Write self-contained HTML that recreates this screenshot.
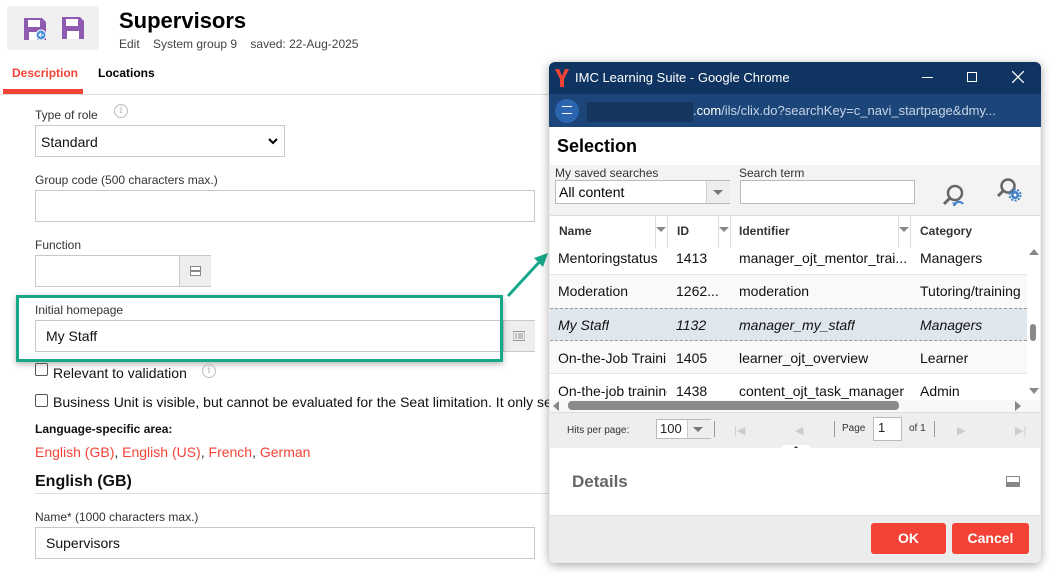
<!DOCTYPE html>
<html><head><meta charset="utf-8"><style>
*{box-sizing:border-box;margin:0;padding:0}
body{width:1052px;height:573px;overflow:hidden;background:#fff;font-family:"Liberation Sans",Arial,sans-serif;position:relative;color:#222}
.a{position:absolute}
.lbl{font-size:12px;color:#333}
.inp{border:1px solid #c8c8c8;background:#fff;position:absolute}
.t14{font-size:14px;color:#111}
.cell{position:absolute;font-size:14px;color:#111;white-space:nowrap;overflow:hidden}
</style></head><body>
<!-- header -->
<div class="a" style="left:7px;top:6px;width:92px;height:44px;background:#f0f0f0;border-radius:4px"></div>
<svg class="a" style="left:23px;top:17px" width="24" height="24" viewBox="0 0 24 24"><path d="M1 1h18l4 4v18H1z" fill="#8e5bb0"/><rect x="5" y="3" width="12" height="7" fill="#fff"/><rect x="6" y="15" width="8" height="8" fill="#fff"/><circle cx="18" cy="18" r="5" fill="#4a90d9" stroke="#fff"/><path d="M21 18h-5m2-2l-2 2 2 2" stroke="#fff" fill="none"/></svg>
<svg class="a" style="left:62px;top:17px" width="22" height="22" viewBox="0 0 22 22"><path d="M0 0h18l4 4v18H0z" fill="#8e5bb0"/><rect x="4" y="2" width="12" height="7" fill="#fff"/><rect x="5" y="14" width="12" height="8" fill="#fff"/></svg>
<div class="a" style="left:119px;top:8px;font-size:22px;font-weight:bold;color:#000">Supervisors</div>
<div class="a" style="left:119px;top:37px;font-size:12px;color:#444">Edit&nbsp;&nbsp;&nbsp;&nbsp;System group 9&nbsp;&nbsp;&nbsp;&nbsp;saved: 22-Aug-2025</div>
<div class="a" style="left:12px;top:66px;font-size:12px;font-weight:bold;color:#f44336">Description</div>
<div class="a" style="left:98px;top:66px;font-size:12px;font-weight:bold;color:#000">Locations</div>
<div class="a" style="left:3px;top:89px;width:80px;height:5px;background:#f44336"></div>
<div class="a" style="left:0;top:94px;width:549px;height:1px;background:#ddd"></div>
<!-- form -->
<div class="a lbl" style="left:35px;top:108px">Type of role</div>
<div class="a" style="left:114px;top:104px;width:14px;height:14px;border:1px solid #bbb;border-radius:50%;font-size:10px;color:#aaa;text-align:center;line-height:12px;font-family:'Liberation Serif'">i</div>
<div class="inp" style="left:35px;top:125px;width:250px;height:32px"><span class="t14 a" style="left:5px;top:8px">Standard</span><svg class="a" style="right:6px;top:12px" width="10" height="7"><path d="M1 1l4 4 4-4" stroke="#000" stroke-width="2" fill="none"/></svg></div>
<div class="a lbl" style="left:35px;top:173px">Group code (500 characters max.)</div>
<div class="inp" style="left:35px;top:190px;width:500px;height:32px"></div>
<div class="a lbl" style="left:35px;top:238px">Function</div>
<div class="inp" style="left:35px;top:255px;width:176px;height:32px"><div class="a" style="left:143px;top:0;width:32px;height:30px;background:#eee;border-left:1px solid #ccc"></div><div class="a" style="left:154px;top:10px;width:11px;height:10px;border:1px solid #888;background:linear-gradient(#fff 3px,#888 3px,#888 5px,#fff 5px)"></div></div>
<div class="a lbl" style="left:35px;top:303px">Initial homepage</div>
<div class="inp" style="left:35px;top:320px;width:500px;height:32px"><span class="t14 a" style="left:10px;top:7px">My Staff</span><div class="a" style="left:467px;top:0;width:32px;height:30px;background:#eee;border-left:1px solid #ccc"></div><svg class="a" style="left:477px;top:10px" width="12" height="10"><path d="M0 .5h12M0 9.5h12M0 .5v9M12 .5v9" stroke="#999"/><path d="M2 3h2M5 3h5M2 5h2M5 5h5M2 7h2M5 7h5" stroke="#999"/></svg></div>
<div class="a" style="left:16px;top:295px;width:487px;height:67px;border:3px solid #16a889;box-shadow:0 2px 6px rgba(0,0,0,.3)"></div>
<svg class="a" style="left:500px;top:250px" width="55" height="50"><path d="M8 46L43 8" stroke="#16a889" stroke-width="3"/><path d="M48 3L34 8l9 9z" fill="#16a889"/></svg>
<div class="a" style="left:35px;top:363px;width:13px;height:13px;border:1px solid #555;border-radius:2px"></div>
<div class="a t14" style="left:53px;top:365px">Relevant to validation</div>
<div class="a" style="left:202px;top:364px;width:14px;height:14px;border:1px solid #bbb;border-radius:50%;font-size:10px;color:#aaa;text-align:center;line-height:12px;font-family:'Liberation Serif'">i</div>
<div class="a" style="left:35px;top:394px;width:13px;height:13px;border:1px solid #555;border-radius:2px"></div>
<div class="a t14" style="left:53px;top:394px;white-space:nowrap">Business Unit is visible, but cannot be evaluated for the Seat limitation. It only se</div>
<div class="a" style="left:35px;top:422px;font-size:12px;font-weight:bold;color:#111">Language-specific area:</div>
<div class="a" style="left:35px;top:444px;font-size:14px;color:#333"><span style="color:#f44336">English (GB)</span>, <span style="color:#f44336">English (US)</span>, <span style="color:#f44336">French</span>, <span style="color:#f44336">German</span></div>
<div class="a" style="left:35px;top:473px;font-size:16px;font-weight:bold;color:#111">English (GB)</div>
<div class="a" style="left:35px;top:493px;width:514px;height:1px;background:#ddd"></div>
<div class="a lbl" style="left:35px;top:510px">Name* (1000 characters max.)</div>
<div class="inp" style="left:35px;top:527px;width:500px;height:32px"><span class="t14 a" style="left:10px;top:7px">Supervisors</span></div>
<!-- dialog -->
<div class="a" style="left:549px;top:62px;width:492px;height:501px;background:#ececec;border-radius:6px;overflow:hidden;box-shadow:0 2px 10px rgba(0,0,0,.35)">
 <div class="a" style="left:0;top:0;width:492px;height:32px;background:#0f3461"></div>
 <svg class="a" style="left:6px;top:7px" width="14" height="18"><path d="M0 0h4l3 7 3-7h4l-5 10v8H5v-8z" fill="#f44336"/></svg>
 <div class="a" style="left:26px;top:8px;font-size:13px;color:#fff">IMC Learning Suite - Google Chrome</div>
 <div class="a" style="left:373px;top:15px;width:11px;height:1px;background:#fff"></div>
 <div class="a" style="left:418px;top:10px;width:10px;height:10px;border:1px solid #fff"></div>
 <svg class="a" style="left:463px;top:9px" width="12" height="12"><path d="M0 0l12 12M12 0L0 12" stroke="#fff" stroke-width="1.3"/></svg>
 <div class="a" style="left:0;top:32px;width:492px;height:33px;background:#1c4679"></div>
 <div class="a" style="left:6px;top:37px;width:24px;height:24px;border-radius:50%;background:#2b65b0"></div>
 <div class="a" style="left:13px;top:44px;width:10px;height:3px;border-top:1px solid #fff"></div>
 <div class="a" style="left:13px;top:51px;width:10px;border-top:1px solid #fff"></div>
 <div class="a" style="left:38px;top:40px;width:106px;height:20px;background:#16355f"></div>
 <div class="a" style="left:144px;top:41px;font-size:13px;color:#c8d4e6;white-space:nowrap"><span style="color:#fff">.com</span>/ils/clix.do?searchKey=c_navi_startpage&amp;dmy...</div>
 <div class="a" style="left:1px;top:65px;width:490px;height:38px;background:#fff"></div>
 <div class="a" style="left:8px;top:74px;font-size:18px;font-weight:bold;color:#000">Selection</div>
 <div class="a" style="left:1px;top:103px;width:490px;height:50px;background:#f3f3f3"></div>
 <div class="a" style="left:6px;top:104px;font-size:12px;color:#333">My saved searches</div>
 <div class="a" style="left:6px;top:118px;width:175px;height:24px;border:1px solid #bbb;background:#fff"><span class="a" style="left:3px;top:3px;font-size:14px;color:#000">All content</span><div class="a" style="left:150px;top:0;width:24px;height:22px;background:#eee;border-left:1px solid #ccc"></div><div class="a" style="left:157px;top:9px;border:5px solid transparent;border-top:5px solid #777"></div></div>
 <div class="a" style="left:190px;top:104px;font-size:12px;color:#333">Search term</div>
 <div class="a" style="left:191px;top:118px;width:175px;height:24px;border:1px solid #bbb;background:#fff"></div>
 <svg class="a" style="left:393px;top:121px" width="26" height="26"><circle cx="13" cy="10" r="7" stroke="#666" stroke-width="2.5" fill="none"/><path d="M8 15l-6 6" stroke="#666" stroke-width="3"/><path d="M12 23a5 5 0 0 1 9-2" stroke="#3b7fc4" stroke-width="2" fill="none"/><path d="M10 19l2 4 3-2" fill="#3b7fc4"/></svg>
 <svg class="a" style="left:447px;top:115px" width="26" height="26"><circle cx="12" cy="9" r="6.5" stroke="#666" stroke-width="2.5" fill="none"/><path d="M7 14l-5 5" stroke="#666" stroke-width="3"/><circle cx="19" cy="18" r="4" fill="#3b7fc4"/><circle cx="19" cy="18" r="5.5" fill="none" stroke="#3b7fc4" stroke-width="2" stroke-dasharray="2 1.5"/><circle cx="19" cy="18" r="1.5" fill="#fff"/></svg>
 <div class="a" style="left:1px;top:153px;width:490px;height:33px;background:#fff;border-top:1px solid #ddd"></div>
 <div class="a" style="left:106px;top:153px;width:13px;height:33px;border-left:1px solid #ddd;border-right:1px solid #ddd"></div>
 <div class="a" style="left:169px;top:153px;width:13px;height:33px;border-left:1px solid #ddd;border-right:1px solid #ddd"></div>
 <div class="a" style="left:349px;top:153px;width:13px;height:33px;border-left:1px solid #ddd;border-right:1px solid #ddd"></div>
 <div class="a" style="left:107px;top:165px;border:5px solid transparent;border-top:5px solid #888"></div>
 <div class="a" style="left:170px;top:165px;border:5px solid transparent;border-top:5px solid #888"></div>
 <div class="a" style="left:350px;top:165px;border:5px solid transparent;border-top:5px solid #888"></div>
 <div class="a" style="left:10px;top:162px;font-size:12px;font-weight:bold;color:#333">Name</div>
 <div class="a" style="left:128px;top:162px;font-size:12px;font-weight:bold;color:#333">ID</div>
 <div class="a" style="left:190px;top:162px;font-size:12px;font-weight:bold;color:#333">Identifier</div>
 <div class="a" style="left:371px;top:162px;font-size:12px;font-weight:bold;color:#333">Category</div>
 <div class="a" style="left:1px;top:186px;width:477px;height:152px;background:#fff"></div>
 <div class="a" style="left:1px;top:213px;width:477px;height:33px;background:#f9f9f9"></div>
 <div class="a" style="left:1px;top:246px;width:477px;height:33px;background:#dfe6ed;border-top:1px dashed #999;border-bottom:1px dashed #999"></div>
 <div class="a" style="left:1px;top:279px;width:477px;height:33px;background:#f9f9f9"></div>
 <div class="a" style="left:1px;top:212px;width:477px;border-top:1px solid #e6e6e6"></div>
 <div class="a" style="left:1px;top:311px;width:477px;border-top:1px solid #e6e6e6"></div>
 <div class="cell" style="left:9px;top:188px;width:109px">Mentoringstatus</div><div class="cell" style="left:127px;top:188px">1413</div><div class="cell" style="left:190px;top:188px">manager_ojt_mentor_trai...</div><div class="cell" style="left:371px;top:188px">Managers</div>
 <div class="cell" style="left:9px;top:221px;width:109px">Moderation</div><div class="cell" style="left:127px;top:221px">1262...</div><div class="cell" style="left:190px;top:221px">moderation</div><div class="cell" style="left:371px;top:221px;width:107px">Tutoring/training</div>
 <div class="cell" style="left:9px;top:255px;font-style:italic">My Staff</div><div class="cell" style="left:127px;top:255px;font-style:italic">1132</div><div class="cell" style="left:190px;top:255px;font-style:italic">manager_my_staff</div><div class="cell" style="left:371px;top:255px;font-style:italic">Managers</div>
 <div class="cell" style="left:9px;top:288px;width:109px">On-the-Job Training</div><div class="cell" style="left:127px;top:288px">1405</div><div class="cell" style="left:190px;top:288px">learner_ojt_overview</div><div class="cell" style="left:371px;top:288px">Learner</div>
 <div class="cell" style="left:9px;top:321px;width:109px;height:18px">On-the-job training</div><div class="cell" style="left:127px;top:321px">1438</div><div class="cell" style="left:190px;top:321px">content_ojt_task_manager</div><div class="cell" style="left:371px;top:321px">Admin</div>
 <div class="a" style="left:478px;top:186px;width:13px;height:152px;background:#fff"></div>
 <div class="a" style="left:480px;top:187px;border:5px solid transparent;border-bottom:6px solid #888;border-top:0"></div>
 <div class="a" style="left:481px;top:262px;width:6px;height:17px;border-radius:3px;background:#888"></div>
 <div class="a" style="left:480px;top:326px;border:5px solid transparent;border-top:6px solid #888;border-bottom:0"></div>
 <div class="a" style="left:1px;top:338px;width:490px;height:12px;background:#f7f7f7"></div>
 <div class="a" style="left:4px;top:339px;border:5px solid transparent;border-right:6px solid #888;border-left:0"></div>
 <div class="a" style="left:19px;top:339px;width:331px;height:9px;border-radius:4px;background:#8a8a8a"></div>
 <div class="a" style="left:466px;top:339px;border:5px solid transparent;border-left:6px solid #888;border-right:0"></div>
 <div class="a" style="left:1px;top:350px;width:490px;height:35px;background:#eee;border-top:1px solid #ddd"></div>
 <div class="a" style="left:18px;top:363px;font-size:10px;color:#333">Hits per page:</div>
 <div class="a" style="left:107px;top:357px;width:55px;height:20px;border:1px solid #bbb;background:#fff"><span class="a" style="left:3px;top:1px;font-size:13px">100</span><div class="a" style="left:30px;top:0;width:24px;height:18px;background:#eee;border-left:1px solid #ccc"></div><div class="a" style="left:36px;top:7px;border:5px solid transparent;border-top:5px solid #777"></div></div>
 <div class="a" style="left:165px;top:359px;width:1px;height:16px;background:#999"></div>
 <div class="a" style="left:185px;top:362px;color:#ccc;font-size:11px">|◀</div>
 <div class="a" style="left:246px;top:362px;color:#ccc;font-size:11px">◀</div>
 <div class="a" style="left:285px;top:359px;width:1px;height:16px;background:#999"></div>
 <div class="a" style="left:293px;top:361px;font-size:10px;color:#333">Page</div>
 <div class="a" style="left:324px;top:355px;width:29px;height:24px;border:1px solid #bbb;background:#fff;font-size:13px;padding:2px 4px">1</div>
 <div class="a" style="left:360px;top:361px;font-size:10px;color:#333">of 1</div>
 <div class="a" style="left:385px;top:359px;width:1px;height:16px;background:#999"></div>
 <div class="a" style="left:408px;top:362px;color:#ccc;font-size:11px">▶</div>
 <div class="a" style="left:466px;top:362px;color:#ccc;font-size:11px">▶|</div>
 <div class="a" style="left:231px;top:383px;width:32px;height:6px;background:#fff;border-radius:6px 6px 0 0"></div>
 <div class="a" style="left:244px;top:384px;border:3px solid transparent;border-bottom:3px solid #333;border-top:0"></div>
 <div class="a" style="left:1px;top:386px;width:490px;height:68px;background:#fff;border-bottom:1px solid #ddd"></div>
 <div class="a" style="left:23px;top:410px;font-size:17px;font-weight:bold;color:#666">Details</div>
 <div class="a" style="left:457px;top:414px;width:14px;height:11px;border:1px solid #888;background:linear-gradient(#fff 5px,#888 5px)"></div>
 <div class="a" style="left:322px;top:461px;width:75px;height:31px;background:#f44336;border-radius:3px;color:#fff;font-weight:bold;font-size:14px;text-align:center;line-height:31px">OK</div>
 <div class="a" style="left:403px;top:461px;width:77px;height:31px;background:#f44336;border-radius:3px;color:#fff;font-weight:bold;font-size:14px;text-align:center;line-height:31px">Cancel</div>
</div>
</body></html>
